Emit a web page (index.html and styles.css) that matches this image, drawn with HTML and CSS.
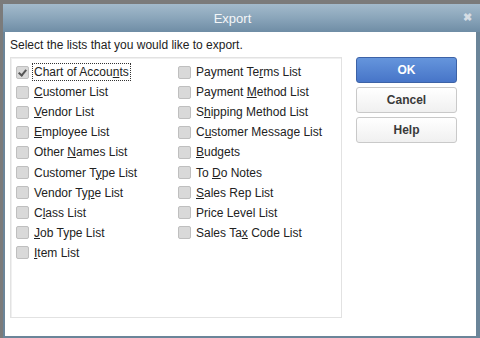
FILE: index.html
```html
<!DOCTYPE html>
<html lang="en">
<head>
    <meta charset="UTF-8">
    <title>Export</title>
    <link rel="stylesheet" href="styles.css">
</head>
<body>

    <div class="dialog">
        <div class="titlebar">
            <span class="title">Export</span>
            <span class="close">&#x2716;</span>
        </div>
        <div class="content">
            <p class="prompt">Select the lists that you would like to export.</p>
            <div class="main">
                <div class="lists">
                    <label class="item"><span class="box checked"></span><span class="focus">Chart of Accou<u>n</u>ts</span></label>
                    <label class="item"><span class="box"></span><span>Payment Te<u>r</u>ms List</span></label>
                    <label class="item"><span class="box"></span><span><u>C</u>ustomer List</span></label>
                    <label class="item"><span class="box"></span><span>Payment <u>M</u>ethod List</span></label>
                    <label class="item"><span class="box"></span><span><u>V</u>endor List</span></label>
                    <label class="item"><span class="box"></span><span>S<u>h</u>ipping Method List</span></label>
                    <label class="item"><span class="box"></span><span><u>E</u>mployee List</span></label>
                    <label class="item"><span class="box"></span><span>C<u>u</u>stomer Message List</span></label>
                    <label class="item"><span class="box"></span><span>Other <u>N</u>ames List</span></label>
                    <label class="item"><span class="box"></span><span><u>B</u>udgets</span></label>
                    <label class="item"><span class="box"></span><span>Customer T<u>y</u>pe List</span></label>
                    <label class="item"><span class="box"></span><span>To <u>D</u>o Notes</span></label>
                    <label class="item"><span class="box"></span><span>Vendor Ty<u>p</u>e List</span></label>
                    <label class="item"><span class="box"></span><span><u>S</u>ales Rep List</span></label>
                    <label class="item"><span class="box"></span><span>C<u>l</u>ass List</span></label>
                    <label class="item"><span class="box"></span><span>Price Level List</span></label>
                    <label class="item"><span class="box"></span><span><u>J</u>ob Type List</span></label>
                    <label class="item"><span class="box"></span><span>Sales Ta<u>x</u> Code List</span></label>
                    <label class="item"><span class="box"></span><span><u>I</u>tem List</span></label>
                </div>
                <div class="buttons">
                    <button class="btn primary">OK</button>
                    <button class="btn">Cancel</button>
                    <button class="btn">Help</button>
                </div>
            </div>
        </div>
    </div>

</body>
</html>
```

FILE: styles.css
```css
body {
    margin: 0;
    padding: 4px 0 0 3px;
    background-color: #7b7b7b;
    font-family: "Liberation Sans", Arial, sans-serif;
    font-size: 12px;
    color: #222;
}

.dialog {
    width: 477px;
    height: 334px;
    box-sizing: border-box;
    background-color: #6b8599;
    padding: 0 4px 2px 2px;
    display: flex;
    flex-direction: column;
    overflow: hidden;
}

.titlebar {
    height: 28px;
    margin: 0 -4px 0 -2px;
    background: linear-gradient(#a3bacc, #8aa5ba 50%, #6f8da5);
    display: flex;
    align-items: center;
    justify-content: center;
    position: relative;
}

.title {
    color: #f4f6f8;
    font-size: 13px;
    margin-right: 18px;
}

.close {
    position: absolute;
    right: 8px;
    top: 7px;
    color: #d5dde4;
    font-size: 11px;
    font-weight: bold;
}

.content {
    flex: 1;
    background-color: #fff;
    padding: 6px 0 0 5px;
}

.prompt {
    margin: 0 0 5px 0;
    line-height: 14px;
}

.main {
    display: flex;
    align-items: flex-start;
}

.lists {
    width: 332px;
    height: 261px;
    box-sizing: border-box;
    border: 1px solid #e2e2e2;
    box-shadow: inset 1px 1px 0 #f0f0f0;
    padding: 4px 0 0 5px;
    display: grid;
    grid-template-columns: 162px 162px;
    grid-auto-rows: 20.1px;
    align-content: start;
}

.item {
    display: flex;
    align-items: center;
    white-space: nowrap;
}

.box {
    width: 11px;
    height: 11px;
    border: 1px solid #bfbfbf;
    border-radius: 2px;
    background-color: #d9d9d9;
    margin-right: 5px;
    flex-shrink: 0;
    position: relative;
}

.box.checked::after {
    content: "";
    position: absolute;
    left: 3px;
    top: 1px;
    width: 3px;
    height: 6px;
    border: solid #555;
    border-width: 0 2px 2px 0;
    transform: rotate(40deg);
}

.focus {
    outline: 1px dotted #333;
    outline-offset: 1px;
}

u {
    text-decoration-thickness: 1px;
    text-underline-offset: 1px;
}

.buttons {
    margin-left: 14px;
    margin-top: 0;
    display: flex;
    flex-direction: column;
    gap: 4px;
}

.btn {
    width: 101px;
    height: 26px;
    border: 1px solid #c9c9c9;
    border-radius: 3px;
    background: linear-gradient(#ffffff, #f0f0f0);
    font-family: "Liberation Sans", Arial, sans-serif;
    font-size: 12px;
    font-weight: bold;
    color: #3a3a3a;
    padding: 0;
}

.btn.primary {
    border-color: #3c62a6;
    background: linear-gradient(#6595dc, #4775c8);
    color: #fff;
}
```
